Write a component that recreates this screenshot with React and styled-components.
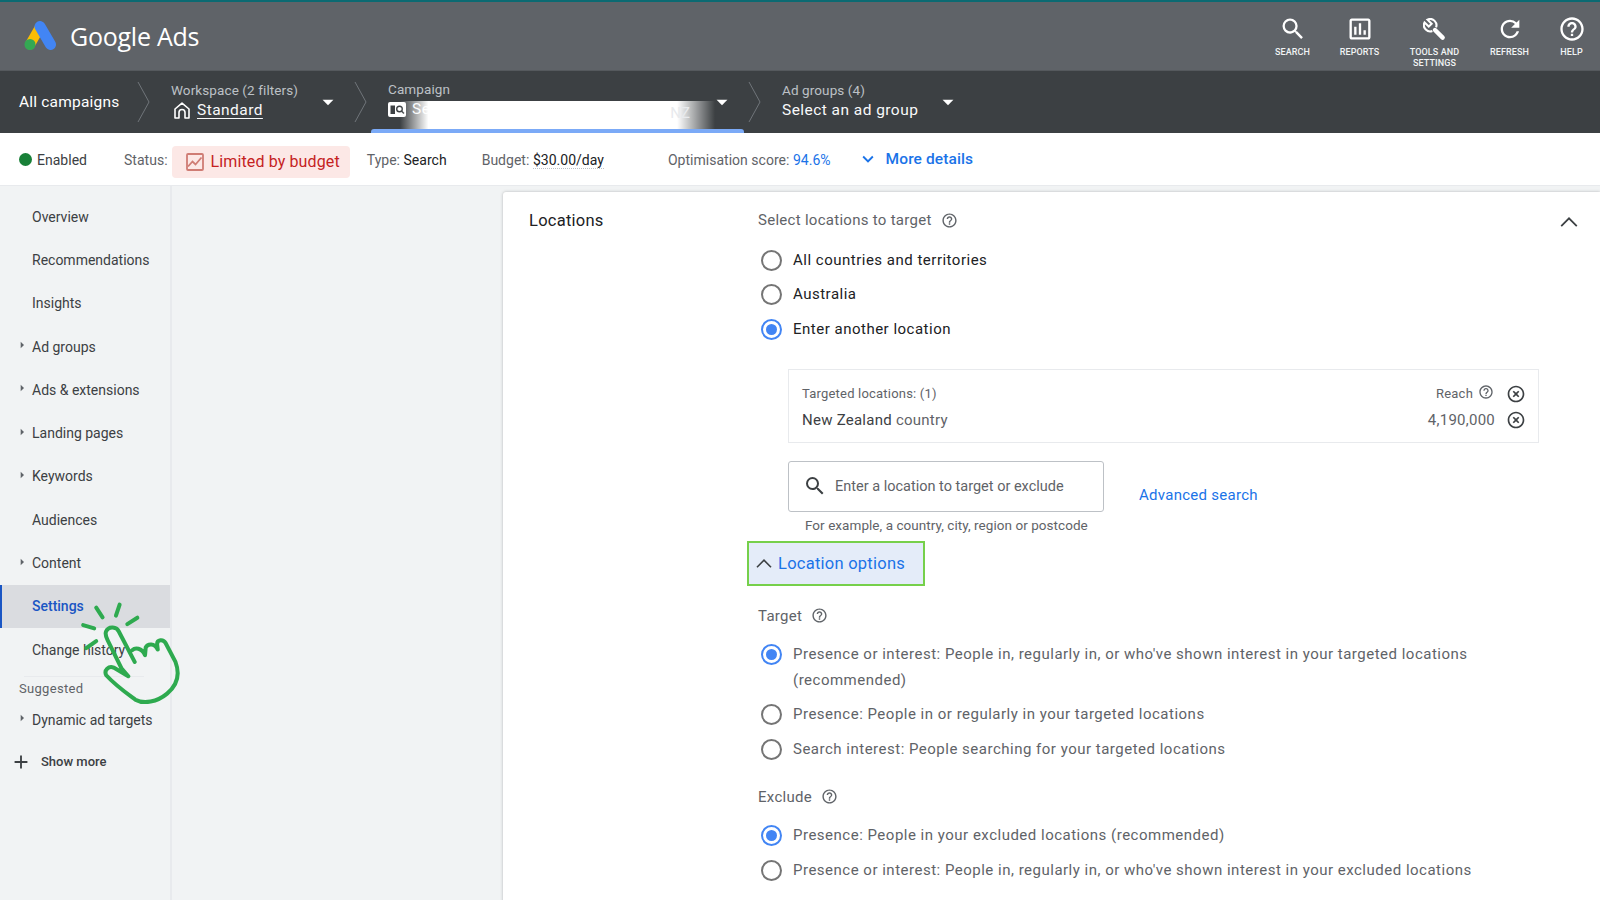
import React from "react";
import styled, { createGlobalStyle } from "styled-components";
import {
  MdSearch,
  MdOutlineAssessment,
  MdRefresh,
  MdHelpOutline,
  MdArrowDropDown,
  MdExpandMore,
  MdAdd,
  MdHighlightOff,
  MdArrowRight,
} from "react-icons/md";

const GlobalStyle = createGlobalStyle`
  html, body {
    margin: 0;
    padding: 0;
    background: #f1f3f4;
  }
  * {
    box-sizing: border-box;
  }
`;

function WrenchIcon() {
  return (
    <svg width="23" height="23" viewBox="0 0 24 24">
      <path
        fill="none"
        stroke="#fff"
        strokeWidth="2.2"
        d="M13.6 9.9c.9-2.3.4-5-1.5-6.9-2-2-5-2.4-7.4-1.3L9 6 6 9 1.6 4.7C.4 7.1.9 10.1 2.9 12.1c1.9 1.9 4.6 2.4 6.9 1.5"
      />
      <path d="M12.5 12.5 20.5 20.5" stroke="#fff" strokeWidth="4.6" strokeLinecap="round" />
    </svg>
  );
}

const headerTools = [
  { icon: <MdSearch />, label: "SEARCH", width: 67 },
  { icon: <MdOutlineAssessment />, label: "REPORTS", width: 67 },
  { icon: <WrenchIcon />, label: "TOOLS AND SETTINGS", width: 83 },
  { icon: <MdRefresh />, label: "REFRESH", width: 67 },
  { icon: <MdHelpOutline />, label: "HELP", width: 57 },
];

const navItems = [
  { label: "Overview" },
  { label: "Recommendations" },
  { label: "Insights" },
  { label: "Ad groups", arrow: true },
  { label: "Ads & extensions", arrow: true },
  { label: "Landing pages", arrow: true },
  { label: "Keywords", arrow: true },
  { label: "Audiences" },
  { label: "Content", arrow: true },
  { label: "Settings", active: true },
  { label: "Change history" },
];

function GoogleAdsLogo() {
  return (
    <svg width="33" height="29" viewBox="0 0 33 29">
      <path d="M15.5 7 6 23.5" stroke="#fbbc04" strokeWidth="10" strokeLinecap="round" />
      <path d="M16 5.5 26.5 23.5" stroke="#4285f4" strokeWidth="11" strokeLinecap="round" />
      <circle cx="6" cy="23.5" r="5.5" fill="#34a853" />
    </svg>
  );
}

function HomeIcon() {
  return (
    <HomeSvg width="16" height="17" viewBox="0 0 16 17" fill="none" stroke="#fff" strokeWidth="1.6" strokeLinejoin="round">
      <path d="M1 7 8 1.2 15 7V16H11V10.5A3 3 0 0 0 5 10.5V16H1Z" />
    </HomeSvg>
  );
}

function CampaignBadge() {
  return (
    <svg width="18" height="15" viewBox="0 0 18 15">
      <rect width="18" height="15" rx="2" fill="#fff" />
      <rect x="2.5" y="3.5" width="4.5" height="8.5" fill="#3c4043" />
      <circle cx="11.5" cy="7" r="2.8" fill="none" stroke="#3c4043" strokeWidth="1.4" />
      <path d="M13.5 9 16 11.5" stroke="#3c4043" strokeWidth="1.5" />
    </svg>
  );
}

function BudgetIcon() {
  return (
    <svg width="18" height="18" viewBox="0 0 18 18" fill="none" stroke="#cf7c74" strokeWidth="1.8">
      <rect x="1" y="1" width="16" height="16" rx="1" />
      <path d="M2 13.5 6.5 8.5 9.5 11.5 15.5 4.5" />
    </svg>
  );
}

function ThinChevronUp({ w, h }) {
  return (
    <svg width={w} height={h} viewBox="0 0 16 9" fill="none" stroke="#3c4043" strokeWidth="1.6">
      <path d="M1 8.3 8 1.2 15 8.3" />
    </svg>
  );
}

function CrumbChevron() {
  return (
    <CrumbArrow width="13" height="42" viewBox="0 0 13 42" fill="none" stroke="#70757a">
      <path d="M1 1 12 21 1 41" />
    </CrumbArrow>
  );
}

function HandCursor() {
  return (
    <HandOverlay width="104" height="107" viewBox="240 120 310 320" fill="none" stroke="#2eaa4f" strokeLinecap="round" strokeLinejoin="round">
      <g strokeWidth="12">
        <path d="M288 143 307 172" />
        <path d="M358 134 347 167" />
        <path d="M411 173 381 192" />
        <path d="M249 195 282 205" />
        <path d="M288 243 258 264" />
      </g>
      <path
        strokeWidth="12"
        d="M403 305 356 215C350 200 325 196 317 215 314 224 318 232 322 240L364 325 384 348 340 322C326 316 310 330 318 345 345 375 378 398 405 418 430 432 470 425 500 400 530 375 540 345 525 305L495 248C488 236 470 238 470 252L472 268C462 248 442 250 436 262L434 285C424 262 404 262 396 270"
      />
    </HandOverlay>
  );
}

function RadioRow({ on, muted, children }) {
  return (
    <RadioLine>
      <Radio $on={on} />
      <RadioText $muted={muted}>{children}</RadioText>
    </RadioLine>
  );
}

export default function App() {
  return (
    <Page>
      <GlobalStyle />
      <TopBar>
        <Brand>
          <GoogleAdsLogo />
          <BrandName>Google Ads</BrandName>
        </Brand>
        <Tools>
          {headerTools.map((tool) => (
            <Tool key={tool.label} $w={tool.width}>
              <ToolIcon>{tool.icon}</ToolIcon>
              <ToolLabel>{tool.label}</ToolLabel>
            </Tool>
          ))}
        </Tools>
      </TopBar>

      <CrumbBar>
        <CrumbRoot>All campaigns</CrumbRoot>
        <CrumbChevron />
        <Crumb $w={183}>
          <CrumbLabel>Workspace (2 filters)</CrumbLabel>
          <CrumbValue>
            <HomeIcon />
            <Underlined>Standard</Underlined>
          </CrumbValue>
          <Caret $right={13}><MdArrowDropDown /></Caret>
        </Crumb>
        <CrumbChevron />
        <CampaignCrumb>
          <CrumbLabel>Campaign</CrumbLabel>
          <CrumbValue>
            <CampaignBadge />
            Se
          </CrumbValue>
          <Redaction />
          <RedactionEnd>NZ</RedactionEnd>
          <Caret $right={9}><MdArrowDropDown /></Caret>
        </CampaignCrumb>
        <CrumbChevron />
        <Crumb $w={179}>
          <CrumbLabel>Ad groups (4)</CrumbLabel>
          <CrumbValue>Select an ad group</CrumbValue>
          <Caret $right={0}><MdArrowDropDown /></Caret>
        </Crumb>
      </CrumbBar>

      <StatusBar>
        <EnabledDot />
        <StatusText $dark>Enabled</StatusText>
        <StatusText $ml={37}>Status:</StatusText>
        <BudgetChip>
          <BudgetIcon />
          Limited by budget
        </BudgetChip>
        <StatusText $ml={17}>
          Type: <b>Search</b>
        </StatusText>
        <StatusText $ml={35}>
          Budget: <Dotted>$30.00/day</Dotted>
        </StatusText>
        <StatusText $ml={64}>
          Optimisation score: <ScoreValue>94.6%</ScoreValue>
        </StatusText>
        <MoreChevron><MdExpandMore /></MoreChevron>
        <MoreLink>More details</MoreLink>
      </StatusBar>

      <Main>
        <SideNav>
          {navItems.map((item) => (
            <NavItem key={item.label} $active={item.active}>
              <NavArrow>{item.arrow && <MdArrowRight />}</NavArrow>
              {item.label}
            </NavItem>
          ))}
          <NavDivider />
          <NavHeading>Suggested</NavHeading>
          <NavItem>
            <NavArrow><MdArrowRight /></NavArrow>
            Dynamic ad targets
          </NavItem>
          <ShowMore>
            <MdAdd size={22} />
            Show more
          </ShowMore>
        </SideNav>

        <Content>
          <Card>
            <CardTitle>Locations</CardTitle>
            <CardBody>
              <SubHead>
                Select locations to target
                <HelpMark><MdHelpOutline /></HelpMark>
              </SubHead>
              <RadioGroup $mt={13}>
                <RadioRow>All countries and territories</RadioRow>
                <RadioRow>Australia</RadioRow>
                <RadioRow on>Enter another location</RadioRow>
              </RadioGroup>

              <TargetBox>
                <TargetRow>
                  <TargetHead>Targeted locations: (1)</TargetHead>
                  <ReachCell>
                    <TargetHead>Reach</TargetHead>
                    <SmallHelp><MdHelpOutline /></SmallHelp>
                    <RemoveBtn><MdHighlightOff /></RemoveBtn>
                  </ReachCell>
                </TargetRow>
                <TargetRow>
                  <PlaceName>
                    <Strong>New Zealand</Strong> country
                  </PlaceName>
                  <ReachCell>
                    <PlaceName>4,190,000</PlaceName>
                    <RemoveBtn><MdHighlightOff /></RemoveBtn>
                  </ReachCell>
                </TargetRow>
              </TargetBox>

              <SearchRow>
                <LocationInput>
                  <MdSearch size={24} />
                  Enter a location to target or exclude
                </LocationInput>
                <AdvancedLink>Advanced search</AdvancedLink>
              </SearchRow>
              <Hint>For example, a country, city, region or postcode</Hint>

              <OptionsToggle>
                <ThinChevronUp w={16} h={9} />
                Location options
              </OptionsToggle>

              <SubHead $mt={20}>
                Target
                <HelpMark><MdHelpOutline /></HelpMark>
              </SubHead>
              <RadioGroup $mt={12}>
                <RadioRow on muted>
                  Presence or interest: People in, regularly in, or who've shown interest in your targeted locations
                  <br />
                  (recommended)
                </RadioRow>
                <RadioRow muted>Presence: People in or regularly in your targeted locations</RadioRow>
                <RadioRow muted>Search interest: People searching for your targeted locations</RadioRow>
              </RadioGroup>

              <SubHead $mt={20}>
                Exclude
                <HelpMark><MdHelpOutline /></HelpMark>
              </SubHead>
              <RadioGroup $mt={12}>
                <RadioRow on muted>Presence: People in your excluded locations (recommended)</RadioRow>
                <RadioRow muted>Presence or interest: People in, regularly in, or who've shown interest in your excluded locations</RadioRow>
              </RadioGroup>
            </CardBody>
            <CollapseBtn><ThinChevronUp w={18} h={10} /></CollapseBtn>
          </Card>
        </Content>
      </Main>

      <HandCursor />
    </Page>
  );
}

const Page = styled.div`
  position: relative;
  width: 1600px;
  height: 900px;
  overflow: hidden;
  background: #f1f3f4;
  color: #3c4043;
  font-family: Roboto, "Liberation Sans", sans-serif;
`;

const TopBar = styled.header`
  height: 71px;
  display: flex;
  align-items: flex-start;
  justify-content: space-between;
  background: #5f6368;
  border-top: 2px solid #0b6a72;
  border-bottom: 1px solid #55595d;
`;

const Brand = styled.div`
  display: flex;
  align-items: center;
  gap: 13px;
  height: 71px;
  margin-top: -2px;
  padding-left: 24px;
`;

const BrandName = styled.span`
  color: #fff;
  font-family: "Open Sans", Roboto, sans-serif;
  font-size: 25px;
  letter-spacing: -0.25px;
`;

const Tools = styled.div`
  display: flex;
`;

const Tool = styled.div`
  width: ${(p) => p.$w}px;
  display: flex;
  flex-direction: column;
  align-items: center;
  color: #fff;
  padding-top: 13px;
`;

const ToolIcon = styled.span`
  display: flex;
  align-items: center;
  height: 28px;
  font-size: 28px;
`;

const ToolLabel = styled.span`
  margin-top: 4px;
  font-size: 9px;
  font-weight: 500;
  line-height: 11px;
  letter-spacing: 0.1px;
  text-align: center;
  color: #f1f3f4;
`;

const CrumbBar = styled.nav`
  height: 62px;
  display: flex;
  align-items: center;
  background: #3c4043;
  color: #fff;
  padding-left: 19px;
`;

const CrumbRoot = styled.span`
  width: 118px;
  font-size: 15.5px;
  font-weight: 400;
  letter-spacing: 0.2px;
`;

const CrumbArrow = styled.svg`
  flex: none;
`;

const Crumb = styled.div`
  position: relative;
  width: ${(p) => p.$w}px;
  margin-left: 21px;
  height: 44px;
  display: flex;
  flex-direction: column;
  justify-content: flex-start;
`;

const CampaignCrumb = styled(Crumb)`
  width: 373px;
  height: 62px;
  margin-left: 4px;
  margin-right: 4px;
  padding: 8px 0 0 17px;
  &::after {
    content: "";
    position: absolute;
    left: 0;
    right: 0;
    bottom: 0;
    height: 4px;
    border-radius: 3px 3px 0 0;
    background: #7baaf7;
  }
`;

const CrumbLabel = styled.span`
  font-size: 13.5px;
  line-height: 20px;
  letter-spacing: 0.1px;
  color: #bdc1c6;
`;

const CrumbValue = styled.span`
  display: flex;
  align-items: center;
  gap: 6px;
  font-size: 15.5px;
  font-weight: 400;
  line-height: 20px;
  letter-spacing: 0.45px;
  color: #f8f9fa;
`;

const HomeSvg = styled.svg`
  margin-left: 3px;
`;

const Underlined = styled.span`
  margin-left: 1px;
  text-decoration: underline;
  text-underline-offset: 3px;
`;

const Caret = styled.span`
  position: absolute;
  right: ${(p) => p.$right}px;
  top: 50%;
  display: flex;
  transform: translateY(-50%);
  font-size: 26px;
  color: #fff;
`;

const Redaction = styled.span`
  position: absolute;
  left: 29px;
  right: 29px;
  top: 30px;
  height: 28px;
  background: linear-gradient(90deg, rgba(255, 255, 255, 0), #fff 9%, #fff 88%, rgba(255, 255, 255, 0));
`;

const RedactionEnd = styled.span`
  position: absolute;
  right: 54px;
  top: 33px;
  font-size: 15px;
  color: #e8eaed;
`;

const StatusBar = styled.section`
  height: 53px;
  display: flex;
  align-items: center;
  background: #fff;
  border-bottom: 1px solid #e8eaed;
  padding-left: 19px;
`;

const EnabledDot = styled.span`
  width: 13px;
  height: 13px;
  margin-right: 5px;
  border-radius: 50%;
  background: #188038;
`;

const StatusText = styled.span`
  margin-left: ${(p) => p.$ml || 0}px;
  margin-top: 2px;
  font-size: 14px;
  letter-spacing: 0.02px;
  color: ${(p) => (p.$dark ? "#3c4043" : "#5f6368")};
  b {
    font-weight: 400;
    color: #202124;
  }
`;

const Dotted = styled.span`
  color: #202124;
  border-bottom: 1px dotted #bdc1c6;
`;

const ScoreValue = styled.span`
  color: #1a73e8;
`;

const BudgetChip = styled.span`
  display: flex;
  align-items: center;
  gap: 7px;
  height: 32px;
  margin: 5px 0 0 4px;
  padding: 0 10px 0 14px;
  border-radius: 4px;
  background: #fce8e6;
  color: #c5221f;
  font-size: 16px;
  letter-spacing: 0.12px;
`;

const MoreChevron = styled.span`
  display: flex;
  margin-left: 26px;
  color: #1a73e8;
  font-size: 22px;
`;

const MoreLink = styled.span`
  margin-left: 7px;
  color: #1a73e8;
  font-size: 15.5px;
  font-weight: 500;
  letter-spacing: 0.1px;
`;

const Main = styled.div`
  display: flex;
  height: 714px;
`;

const SideNav = styled.aside`
  width: 172px;
  flex: none;
  padding-top: 9px;
  border-right: 2px solid #e8eaed;
`;

const NavItem = styled.div`
  height: 43.3px;
  display: flex;
  align-items: center;
  font-size: 14px;
  color: ${(p) => (p.$active ? "#1a56c4" : "#3c4043")};
  font-weight: ${(p) => (p.$active ? 500 : 400)};
  background: ${(p) => (p.$active ? "#dadce0" : "transparent")};
  box-shadow: ${(p) => (p.$active ? "inset 2px 0 0 #1a56c4" : "none")};
`;

const NavArrow = styled.span`
  width: 32px;
  flex: none;
  display: flex;
  justify-content: center;
  padding-left: 11px;
  margin-top: -3px;
  font-size: 16px;
  color: #5f6368;
`;

const NavDivider = styled.div`
  height: 1px;
  margin: 5px 26px 0 24px;
  background: #e8eaed;
`;

const NavHeading = styled.div`
  height: 20px;
  margin-top: 1px;
  padding-left: 19px;
  font-size: 13px;
  line-height: 21px;
  letter-spacing: 0.3px;
  color: #5f6368;
`;

const ShowMore = styled.div`
  display: flex;
  align-items: center;
  gap: 9px;
  height: 40px;
  padding-left: 10px;
  font-size: 13px;
  font-weight: 500;
`;

const Content = styled.main`
  flex: 1;
  padding: 6px 0 0 331px;
`;

const Card = styled.section`
  position: relative;
  display: grid;
  grid-template-columns: 229px 1fr;
  height: 760px;
  padding: 18px 0 0 26px;
  background: #fff;
  border-radius: 3px 0 0 0;
  box-shadow: 0 0 3px rgba(60, 64, 67, 0.35);
`;

const CardTitle = styled.h2`
  margin: 1px 0 0;
  font-size: 16.5px;
  font-weight: 400;
  line-height: 20px;
  letter-spacing: 0.25px;
  color: #202124;
`;

const CardBody = styled.div`
  display: flex;
  flex-direction: column;
`;

const SubHead = styled.div`
  display: flex;
  align-items: center;
  gap: 9px;
  height: 20px;
  margin-top: ${(p) => p.$mt || 0}px;
  font-size: 15px;
  letter-spacing: 0.28px;
  color: #5f6368;
`;

const HelpMark = styled.span`
  display: flex;
  font-size: 17px;
  color: #5f6368;
`;

const RadioGroup = styled.div`
  margin-top: ${(p) => p.$mt}px;
`;

const RadioLine = styled.label`
  display: flex;
  gap: 11px;
  padding: 6.5px 0 4.5px 3px;
  min-height: 34.5px;
`;

const Radio = styled.span`
  flex: none;
  display: flex;
  align-items: center;
  justify-content: center;
  width: 21px;
  height: 21px;
  border-radius: 50%;
  border: 2px solid ${(p) => (p.$on ? "#4285f4" : "#757575")};
  &::after {
    content: "";
    width: 11px;
    height: 11px;
    border-radius: 50%;
    background: ${(p) => (p.$on ? "#4285f4" : "transparent")};
  }
`;

const RadioText = styled.span`
  font-size: 15px;
  line-height: 25.5px;
  margin-top: -2px;
  letter-spacing: 0.5px;
  color: ${(p) => (p.$muted ? "#5f6368" : "#202124")};
`;

const TargetBox = styled.div`
  width: 751px;
  height: 74px;
  margin: 22px 0 0 30px;
  padding: 11px 12px 0 13px;
  border: 1px solid #e8eaed;
`;

const TargetRow = styled.div`
  display: flex;
  align-items: center;
  justify-content: space-between;
  height: 26px;
`;

const TargetHead = styled.span`
  font-size: 13px;
  letter-spacing: 0.2px;
  color: #5f6368;
`;

const ReachCell = styled.span`
  display: flex;
  align-items: center;
  gap: 5px;
`;

const SmallHelp = styled.span`
  display: flex;
  font-size: 16px;
  margin-top: -3px;
  margin-right: 1px;
  color: #5f6368;
`;

const RemoveBtn = styled.span`
  display: flex;
  margin-left: 6px;
  font-size: 20px;
  color: #3c4043;
`;

const PlaceName = styled.span`
  font-size: 15px;
  letter-spacing: 0.25px;
  color: #5f6368;
`;

const Strong = styled.span`
  color: #3c4043;
`;

const SearchRow = styled.div`
  display: flex;
  align-items: center;
  gap: 35px;
  margin: 18px 0 0 30px;
`;

const LocationInput = styled.div`
  display: flex;
  align-items: center;
  gap: 8px;
  width: 316px;
  height: 51px;
  padding-left: 14px;
  border: 1px solid #bdc1c6;
  border-radius: 3px;
  font-size: 14.5px;
  color: #5f6368;
  svg {
    color: #3c4043;
  }
`;

const AdvancedLink = styled.span`
  margin-top: 17px;
  font-size: 15px;
  letter-spacing: 0.27px;
  color: #1a73e8;
`;

const Hint = styled.div`
  height: 16px;
  margin: 5px 0 0 47px;
  font-size: 13.5px;
  line-height: 16px;
  letter-spacing: 0.05px;
  color: #5f6368;
`;

const OptionsToggle = styled.div`
  display: flex;
  align-items: center;
  width: 178px;
  height: 45px;
  margin: 8px 0 0 -11px;
  padding-left: 7px;
  gap: 6px;
  background: #e4ecf9;
  border: 2px solid #76d04b;
  font-size: 16.5px;
  letter-spacing: 0.25px;
  color: #1a73e8;
`;

const CollapseBtn = styled.span`
  position: absolute;
  top: 25px;
  right: 22px;
  display: flex;
`;

const HandOverlay = styled.svg`
  position: absolute;
  left: 80px;
  top: 600px;
`;
